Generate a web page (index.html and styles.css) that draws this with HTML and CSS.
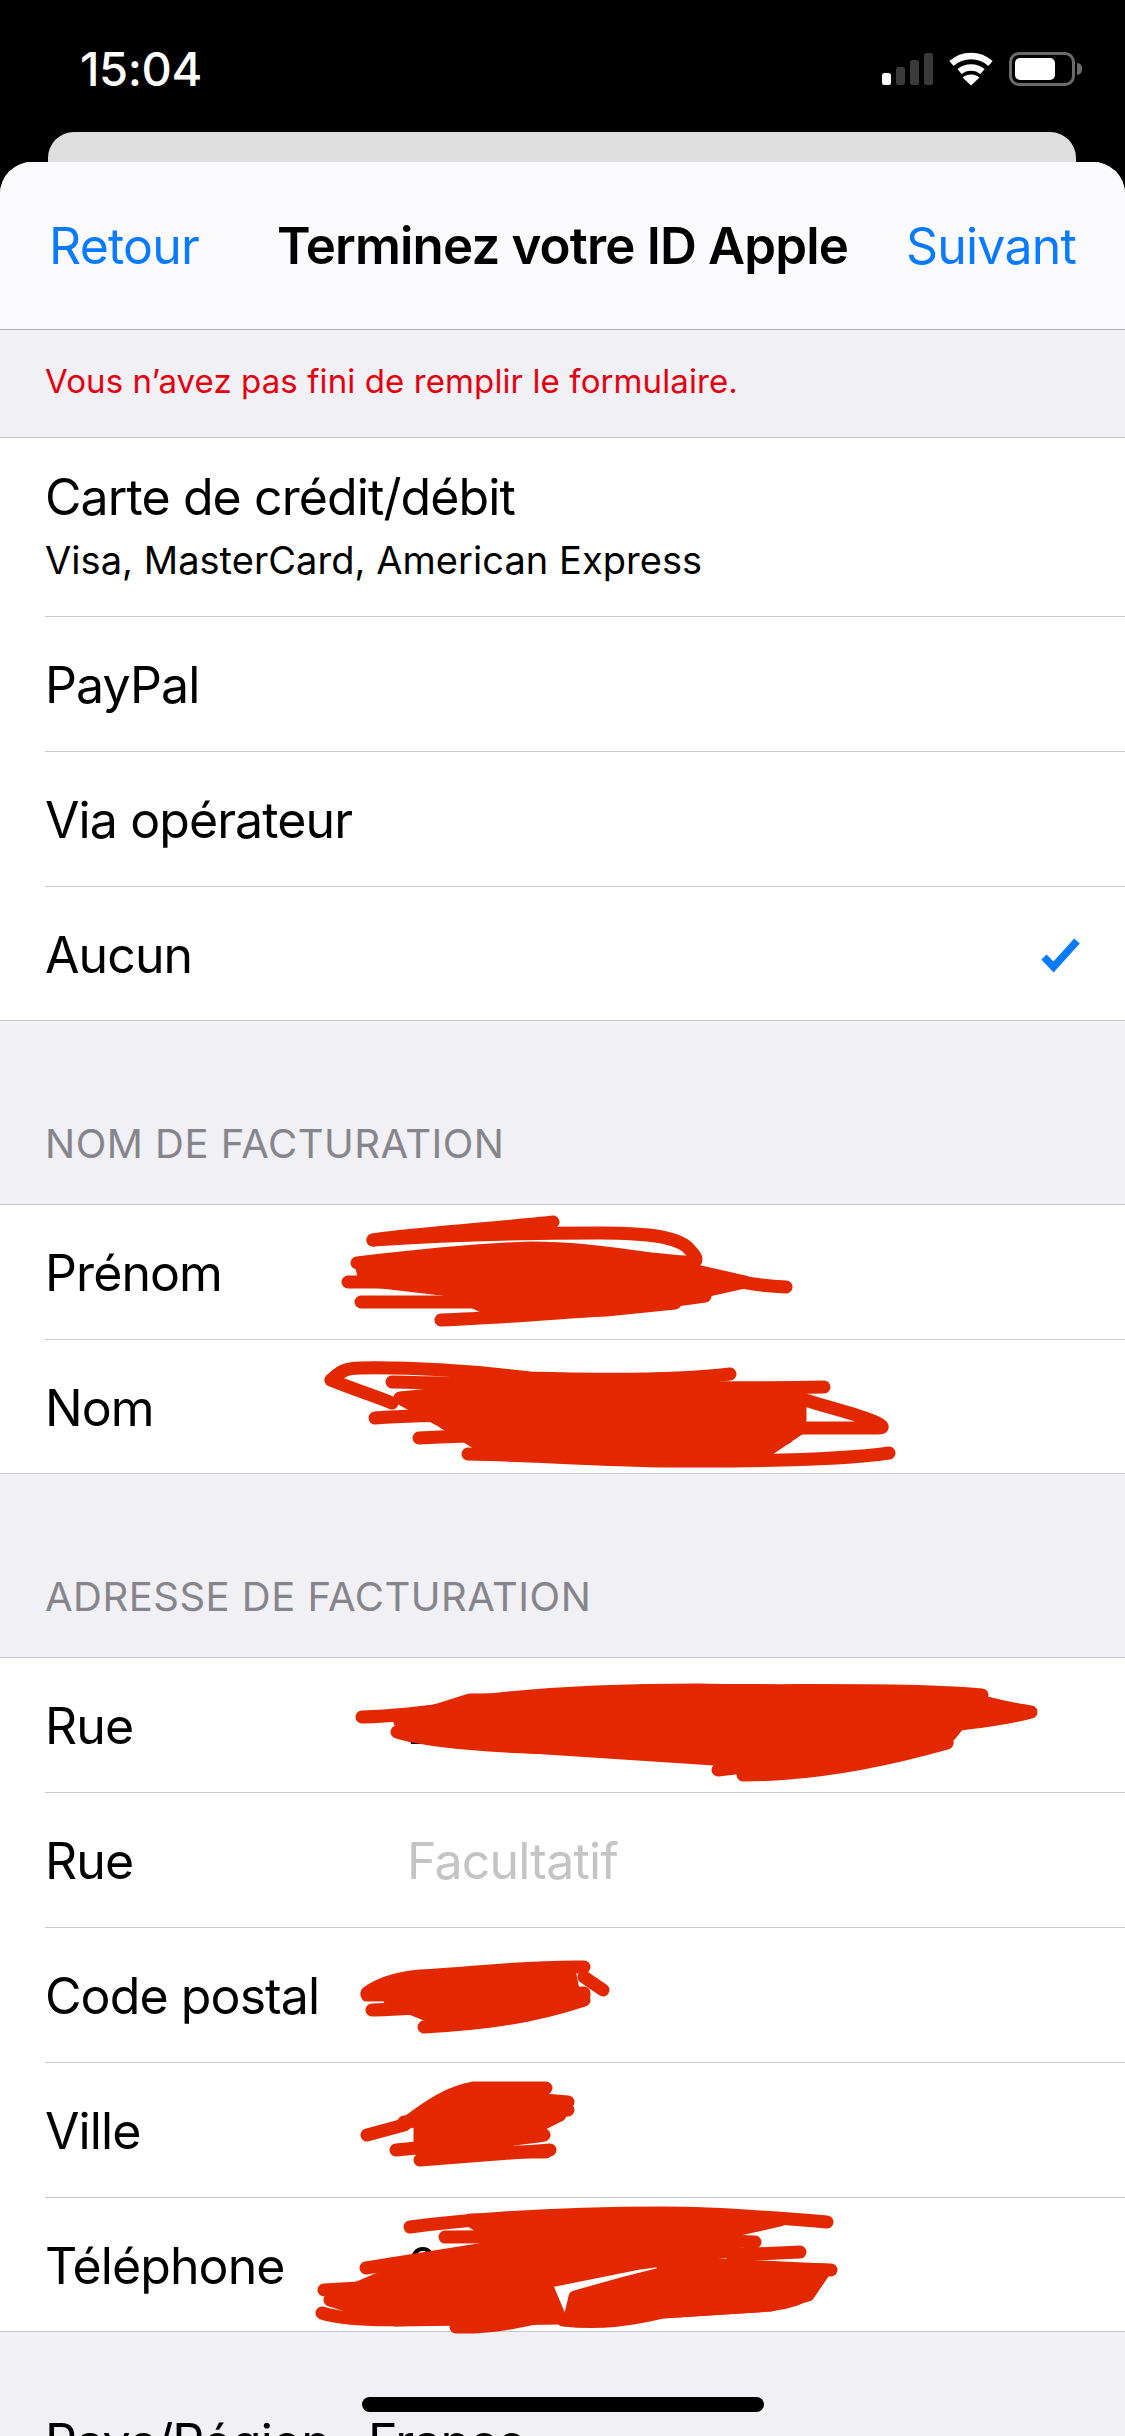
FILE: index.html
```html
<!DOCTYPE html>
<html lang="fr">
<head>
<meta charset="utf-8">
<title>Terminez votre ID Apple</title>
<link rel="stylesheet" href="styles.css">
</head>
<body>
<div class="phone">
  <header class="status">
    <span class="time">15:04</span>
    <div class="status-icons">
      <div class="signal"><i class="bar b1"></i><i class="bar b2"></i><i class="bar b3"></i><i class="bar b4"></i></div>
      <svg class="wifi" viewBox="0 0 46 34"><path class="wifi-arc" d="M3.500 11.500C14.500 1.500 31.500 1.500 42.500 11.500"/><path class="wifi-arc" d="M11.500 19.500C18 14 28 14 34.500 19.500"/><path class="wifi-dot" d="M23 33.500L14.500 25.500C19 21.500 27 21.500 31.500 25.500Z"/></svg>
      <div class="battery"><div class="battery-body"><div class="battery-fill"></div></div><div class="battery-nub"></div></div>
    </div>
  </header>
  <div class="back-card"></div>
  <main class="sheet">
    <nav class="nav">
      <span class="nav-link">Retour</span>
      <span class="nav-title">Terminez votre ID Apple</span>
      <span class="nav-link nav-next">Suivant</span>
    </nav>
    <p class="error">Vous n’avez pas fini de remplir le formulaire.</p>

    <section class="group">
      <div class="row row-tall"><div class="row-inner stack"><span class="label">Carte de crédit/débit</span><span class="sub">Visa, MasterCard, American Express</span></div></div>
      <div class="row"><div class="row-inner"><span class="label">PayPal</span></div></div>
      <div class="row"><div class="row-inner"><span class="label">Via opérateur</span></div></div>
      <div class="row"><div class="row-inner between"><span class="label">Aucun</span>
        <svg class="check" viewBox="0 0 40 36"><path d="M3 20L12.500 30L36 4"/></svg></div></div>
    </section>

    <h2 class="section-title">NOM DE FACTURATION</h2>
    <section class="group">
      <div class="row"><div class="row-inner"><span class="label field">Prénom</span></div></div>
      <div class="row"><div class="row-inner"><span class="label field">Nom</span></div></div>
    </section>

    <h2 class="section-title">ADRESSE DE FACTURATION</h2>
    <section class="group">
      <div class="row"><div class="row-inner"><span class="label field">Rue</span><span class="value">2</span></div></div>
      <div class="row"><div class="row-inner"><span class="label field">Rue</span><span class="value placeholder">Facultatif</span></div></div>
      <div class="row"><div class="row-inner"><span class="label field">Code postal</span></div></div>
      <div class="row"><div class="row-inner"><span class="label field">Ville</span></div></div>
      <div class="row"><div class="row-inner"><span class="label field">Téléphone</span><span class="value">0</span></div></div>
    </section>

    <div class="country"><span class="label country-label">Pays/Région</span><span class="value">France</span></div>
  </main>

  <svg class="scribble" viewBox="0 0 1125 2436">
    <!-- Prénom -->
    <path d="M373 1240C400 1235 500 1228 553 1222"/>
    <path d="M373 1240C450 1235 530 1233 600 1233C650 1233 680 1237 690 1250C698 1258 698 1262 690 1262C650 1262 600 1248 530 1248C470 1250 400 1258 357 1263"/>
    <path d="M348 1282H683"/><path d="M361 1302H675"/>
    <path d="M683 1268C710 1275 740 1285 786 1287"/>
    <path d="M441 1320C500 1318 560 1312 606 1310L675 1303"/>
    <path d="M362 1268L560 1255L690 1268L705 1296L640 1305L500 1315L450 1290L365 1280Z" class="fillin"/>
    <path d="M683 1268L745 1282L700 1292Z" class="fillin"/>
    <!-- Nom -->
    <path d="M331 1380C340 1372 345 1368 360 1368C420 1367 480 1372 530 1378C600 1380 680 1380 730 1374"/>
    <path d="M331 1380C350 1388 375 1396 392 1403"/>
    <path d="M392 1382C500 1384 700 1390 824 1387"/>
    <path d="M805 1400C830 1408 860 1415 875 1422C884 1426 884 1428 878 1428L778 1428"/>
    <path d="M375 1418C450 1412 600 1416 683 1420"/>
    <path d="M419 1438C540 1432 700 1436 786 1438"/>
    <path d="M468 1454C560 1456 620 1462 700 1461C770 1461 840 1460 889 1453"/>
    <path d="M400 1398L560 1382L800 1392L800 1428L760 1455L480 1445L440 1420Z" class="fillin"/>
    <!-- Rue -->
    <path d="M362 1717C400 1716 430 1712 464 1707"/>
    <path d="M467 1703C530 1694 620 1690 698 1690C780 1692 900 1688 982 1695"/>
    <path d="M982 1702C1000 1706 1015 1710 1031 1712C1010 1718 980 1722 952 1725"/>
    <path d="M397 1732C430 1742 499 1747 560 1748L797 1748"/>
    <path d="M718 1770C790 1762 880 1752 947 1742"/>
    <path d="M743 1775C810 1775 880 1762 947 1743"/>
    <path d="M400 1722L470 1700L980 1698L950 1735L760 1762L500 1745Z" class="fillin"/>
    <path d="M975 1700L1020 1712L950 1722Z" class="fillin"/>
    <!-- Code postal -->
    <path d="M367 1993C380 1983 400 1978 420 1976C470 1974 520 1966 584 1967"/>
    <path d="M584 1977L603 1990"/>
    <path d="M367 1995L584 1993"/>
    <path d="M372 2010C440 2008 520 2000 584 1995"/>
    <path d="M424 2027C480 2024 530 2018 584 2000"/>
    <path d="M400 1985L570 1975L575 2000L440 2020L390 2000Z" class="fillin"/>
    <!-- Ville -->
    <path d="M367 2135L404 2125C430 2105 450 2092 474 2088H546"/>
    <path d="M544 2100L568 2102"/>
    <path d="M404 2122L568 2110"/>
    <path d="M396 2150C450 2145 500 2142 544 2135"/>
    <path d="M479 2152L546 2152"/>
    <path d="M420 2160L550 2150"/>
    <path d="M420 2115L480 2092L540 2095L560 2115L500 2145L420 2150Z" class="fillin"/>
    <!-- Téléphone -->
    <path d="M410 2227C480 2218 560 2213 663 2213C720 2213 780 2218 827 2222"/>
    <path d="M445 2237C540 2236 680 2238 755 2242"/>
    <path d="M366 2268L510 2245L663 2237"/>
    <path d="M324 2290L548 2277"/>
    <path d="M322 2313C350 2322 395 2322 548 2313"/>
    <path d="M456 2327C490 2328 520 2322 556 2313"/>
    <path d="M563 2320C600 2324 630 2320 663 2312L770 2305C790 2302 805 2298 808 2290"/>
    <path d="M732 2255L800 2252"/>
    <path d="M663 2267L831 2270"/>
    <path d="M330 2300L395 2272L540 2250L700 2232L735 2250L640 2263L545 2282L560 2318L395 2320Z" class="fillin"/>
    <path d="M575 2297L625 2283L700 2264L825 2270L808 2295L770 2305L660 2312L570 2318Z" class="fillin"/>
    <path d="M470 2220L780 2220L700 2238L500 2240Z" class="fillin"/>
  </svg>
  <div class="home-bar"></div>
</div>
</body>
</html>
```

FILE: styles.css
```css
* { box-sizing: border-box; }
html, body { margin: 0; padding: 0; }
body { width: 1125px; height: 2436px; overflow: hidden; background: #000; font-family: Inter, "Liberation Sans", sans-serif; }
.phone { position: relative; width: 1125px; height: 2436px; overflow: hidden; background: #000; }

.status { height: 132px; display: flex; justify-content: space-between; padding: 43px 43px 0 80px; color: #fff; }
.time { font-size: 47px; line-height: 52px; font-weight: 500; letter-spacing: -0.4px; }
.status-icons { display: flex; align-items: flex-start; padding-top: 9px; }
.signal { display: flex; align-items: flex-end; gap: 5px; height: 33px; margin-right: 15px; }
.bar { display: block; width: 9px; background: #3a3a3a; border-radius: 2.500px; }
.b1 { height: 12px; background: #fff; }
.b2 { height: 18px; }
.b3 { height: 25px; }
.b4 { height: 32px; }
.wifi { width: 46px; height: 34px; margin-right: 15px; }
.wifi-arc { fill: none; stroke: #fff; stroke-width: 6.500px; stroke-linecap: butt; }
.wifi-dot { fill: #fff; }
.battery { display: flex; align-items: center; height: 34px; }
.battery-body { width: 66px; height: 34px; border: 3px solid #6b6b6b; border-radius: 10px; padding: 3px; }
.battery-fill { width: 40px; height: 22px; background: #fff; border-radius: 5px; }
.battery-nub { width: 5px; height: 12px; background: #6b6b6b; border-radius: 0 6px 6px 0; margin-left: 2px; }

.back-card { height: 30px; margin: 0 49px 0 48px; background: #dedede; border-radius: 26px 26px 0 0; }
.sheet { height: 2274px; background: #f0f0f5; border-radius: 32px 32px 0 0; overflow: hidden; }

.nav { height: 168px; display: grid; grid-template-columns: 1fr auto 1fr; align-items: center; padding: 0 49px; background: #fafafc; border-bottom: 1px solid #aeaeb2; }
.nav-link { font-size: 50px; color: #0a7aff; letter-spacing: -0.8px; }
.nav-next { justify-self: end; }
.nav-title { font-size: 51px; font-weight: 600; color: #000; letter-spacing: -0.83px; }

.error { margin: 0; height: 108px; display: flex; align-items: center; padding: 0 0 6px 45px; font-size: 33px; color: #e6000f; letter-spacing: 0.1px; border-bottom: 1px solid #c8c8cc; }

.group { background: #fff; border-bottom: 1px solid #c8c8cc; }
.row { height: 135px; padding-left: 45px; }
.row-tall { height: 179px; }
.row-inner { height: 100%; display: flex; align-items: center; padding-top: 2px; border-bottom: 1px solid #c8c8cc; }
.row:last-child { height: 133px; }
.row:last-child .row-inner { border-bottom: 0; }
.stack { flex-direction: column; align-items: flex-start; justify-content: center; gap: 10px; padding-top: 0; padding-bottom: 4px; }
.between { justify-content: space-between; padding-right: 44px; }
.label { font-size: 50px; color: #000; letter-spacing: -0.9px; line-height: 60px; }
.field { display: block; width: 362px; flex: none; }
.sub { font-size: 38px; color: #000; line-height: 46px; letter-spacing: 0.05px; }
.value { font-size: 50px; color: #000; letter-spacing: -0.8px; }
.placeholder { color: #c4c4c6; }
.check { width: 40px; height: 36px; display: block; }
.check path { fill: none; stroke: #0a7aff; stroke-width: 7.500px; stroke-linejoin: miter; }

.section-title { margin: 0; height: 184px; padding: 0 0 36px 45px; display: flex; align-items: flex-end; font-size: 40px; font-weight: 400; color: #85858b; letter-spacing: 0.5px; border-bottom: 1px solid #c8c8cc; }

.country { display: flex; align-items: center; padding: 80px 0 0 45px; }
.country-label { width: 323px; flex: none; }

.scribble { position: absolute; left: 0; top: 0; width: 1125px; height: 2436px; pointer-events: none; }
.scribble path { fill: none; stroke: #e32800; stroke-width: 13px; stroke-linecap: round; stroke-linejoin: round; }
.scribble path.fillin { fill: #e32800; }
.home-bar { position: absolute; left: 362px; top: 2397px; width: 402px; height: 15px; background: #000; border-radius: 8px; }
```
